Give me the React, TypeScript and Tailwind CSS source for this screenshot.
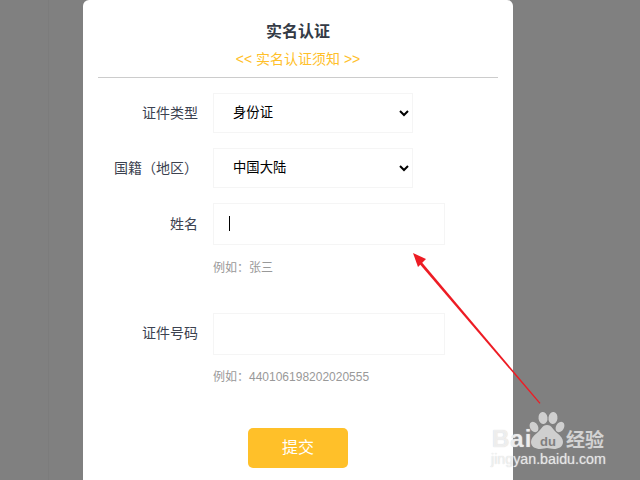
export default function App() {
  const font = "font-['Liberation_Sans','Noto_Sans_CJK_SC',sans-serif]";
  return (
    <div className={`relative h-[480px] w-[640px] overflow-hidden bg-[#808080] ${font}`}>
      <div className="absolute top-0 left-[48px] h-[480px] w-px bg-[#7c7c7c]" />
      <div className="relative ml-[83px] h-[480px] w-[430px] rounded-t-[6px] bg-white px-[15px]">
        <div className="h-[78px] border-b border-[#cccccc] pt-[20px] text-center">
          <div className="text-base leading-6 font-bold text-[#333a45]">实名认证</div>
          <div className="mt-[3px] text-sm leading-6 text-[#ffc029]">&lt;&lt; 实名认证须知 &gt;&gt;</div>
        </div>
        <div className="mt-[15px] flex items-center gap-[15px]">
          <label className="w-[100px] text-right text-sm text-[#3c4250]">证件类型</label>
          <select defaultValue="id" className="h-10 w-[200px] border border-[#f5f5f5] bg-white pb-[2px] pl-[15px] text-[13.33px] text-black outline-none">
            <option value="id">身份证</option>
          </select>
        </div>
        <div className="mt-[15px] flex items-center gap-[15px]">
          <label className="w-[100px] text-right text-sm text-[#3c4250]">国籍（地区）</label>
          <select defaultValue="cn" className="h-10 w-[200px] border border-[#f5f5f5] bg-white pb-[2px] pl-[15px] text-[13.33px] text-black outline-none">
            <option value="cn">中国大陆</option>
          </select>
        </div>
        <div className="mt-[15px] flex items-center gap-[15px]">
          <label className="w-[100px] text-right text-sm text-[#3c4250]">姓名</label>
          <div className="flex h-[42px] w-[232px] items-center border border-[#f5f5f5] pl-[15px]">
            <span className="mb-[2px] h-[15px] w-px bg-black" />
          </div>
        </div>
        <div className="mt-[14px] ml-[115px] text-xs leading-[18px] text-[#999999]">例如：张三</div>
        <div className="mt-[36px] flex items-center gap-[15px]">
          <label className="w-[100px] pb-[2px] text-right text-sm text-[#3c4250]">证件号码</label>
          <div className="h-[42px] w-[232px] border border-[#f5f5f5]" />
        </div>
        <div className="mt-[13px] ml-[115px] text-xs leading-[18px] text-[#999999]">例如：440106198202020555</div>
        <div className="mt-[42px] flex justify-center">
          <button className="h-10 w-[100px] rounded-[5px] bg-[#ffc029] text-base text-white">提交</button>
        </div>
      </div>

      <svg className="absolute top-0 left-0 h-[480px] w-[640px]" viewBox="0 0 640 480" fill="none">
        <polygon points="540.5,403 539.5,403.8 417.5,261.5 419.5,259.5" fill="#ed1c24" />
        <polygon points="413,253 426,259 418,267" fill="#ed1c24" />
        <g fill="#ffffff" fillOpacity="0.62">
          <ellipse cx="543" cy="418" rx="4.5" ry="6" transform="rotate(-8 543 418)" />
          <ellipse cx="553" cy="418" rx="4.5" ry="6" transform="rotate(8 553 418)" />
          <ellipse cx="534" cy="427" rx="4" ry="5.5" transform="rotate(-30 534 427)" />
          <ellipse cx="560" cy="427" rx="4" ry="5.5" transform="rotate(30 560 427)" />
          <path d="M547 425c-5 0-6 5-10 8-4 3-6 6-6 9 0 5 5 7 9 7 3 0 5-1 7-1s4 1 7 1c4 0 9-2 9-7 0-3-2-6-6-9-4-3-5-8-10-8z" />
        </g>
      </svg>
      <div className="absolute top-[427px] left-[492px] text-[24px] leading-6 font-bold tracking-[1px] text-white/70 [text-shadow:0_0_1px_#c8c8c8]">Bai</div>
      <div className="absolute top-[434px] left-[540px] text-[13px] leading-4 font-bold text-[#808080]">du</div>
      <div className="absolute top-[429px] left-[566px] text-[19px] leading-6 font-bold text-white/65">经验</div>
      <div className="absolute top-[449px] left-[491px] text-[14.25px] leading-5 text-white/65 [text-shadow:0_0_1px_#c8c8c8]">jingyan.baidu.com</div>
    </div>
  );
}
